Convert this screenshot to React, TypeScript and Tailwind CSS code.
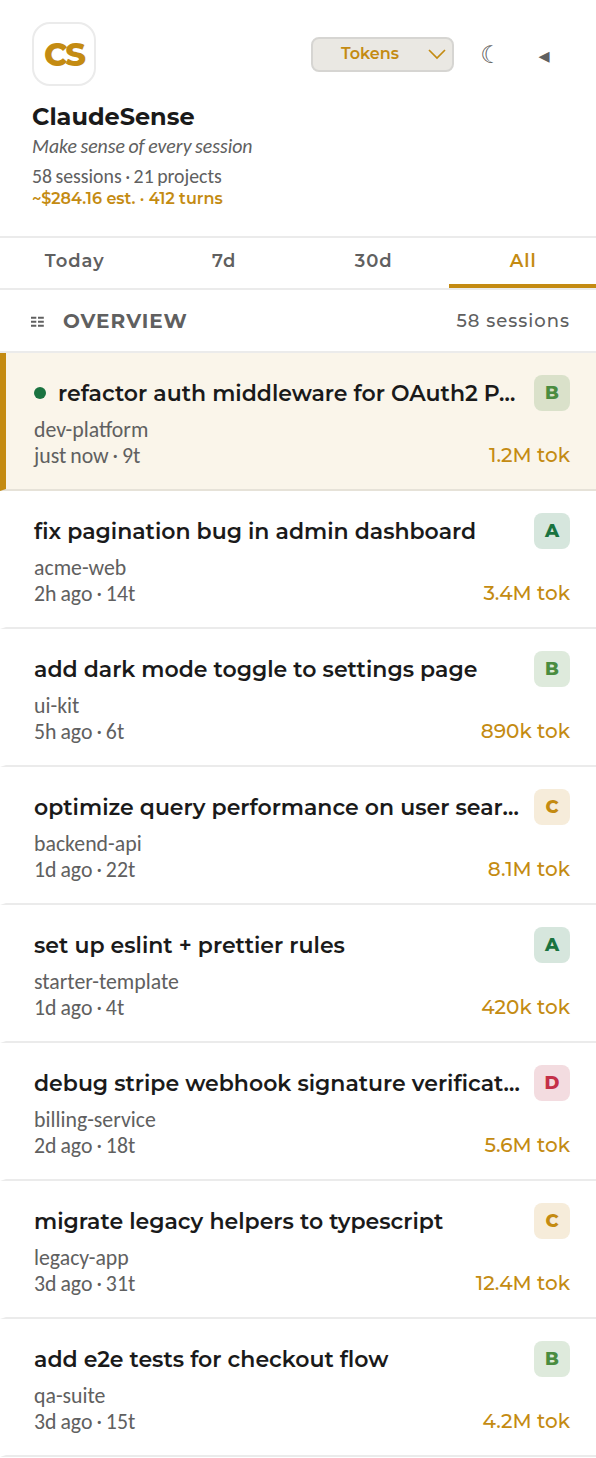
type Grade = "A" | "B" | "C" | "D";

interface Session {
  title: string;
  project: string;
  meta: string;
  tokens: string;
  grade: Grade;
  active?: boolean;
}

const sessions: Session[] = [
  { title: "refactor auth middleware for OAuth2 P…", project: "dev-platform", meta: "just now · 9t", tokens: "1.2M tok", grade: "B", active: true },
  { title: "fix pagination bug in admin dashboard", project: "acme-web", meta: "2h ago · 14t", tokens: "3.4M tok", grade: "A" },
  { title: "add dark mode toggle to settings page", project: "ui-kit", meta: "5h ago · 6t", tokens: "890k tok", grade: "B" },
  { title: "optimize query performance on user sear…", project: "backend-api", meta: "1d ago · 22t", tokens: "8.1M tok", grade: "C" },
  { title: "set up eslint + prettier rules", project: "starter-template", meta: "1d ago · 4t", tokens: "420k tok", grade: "A" },
  { title: "debug stripe webhook signature verificat…", project: "billing-service", meta: "2d ago · 18t", tokens: "5.6M tok", grade: "D" },
  { title: "migrate legacy helpers to typescript", project: "legacy-app", meta: "3d ago · 31t", tokens: "12.4M tok", grade: "C" },
  { title: "add e2e tests for checkout flow", project: "qa-suite", meta: "3d ago · 15t", tokens: "4.2M tok", grade: "B" },
];

const gradeStyles: Record<Grade, string> = {
  A: "bg-[#1a7340]/18 text-[#1a7340]",
  B: "bg-[#4a8c3f]/18 text-[#4a8c3f]",
  C: "bg-[#f6ecda] text-[#c48b12]",
  D: "bg-[#f3dce0] text-[#c43048]",
};

function SessionRow({ s }: { s: Session }) {
  return (
    <li
      className={
        s.active
          ? "h-[138px] border-b-2 border-l-[6px] border-b-[#e6e2d8] border-l-[#c48b12] bg-[#faf5ea] pt-[22px] pr-[26px] pl-[28px]"
          : "h-[138px] border-b-2 border-l-[6px] border-b-[#ebebeb] border-l-transparent pt-[22px] pr-[26px] pl-[28px]"
      }
    >
      <div className="flex h-9 items-center">
        {s.active && <span className="mr-3 size-3 shrink-0 rounded-full bg-[#1a7340]" />}
        <span className="min-w-0 flex-1 pt-0.5 text-[22px] leading-9 font-semibold whitespace-nowrap text-[#1a1a1a]">{s.title}</span>
        <span className={`ml-3 flex size-9 shrink-0 items-center justify-center rounded-lg text-[18px] leading-none font-extrabold ${gradeStyles[s.grade]}`}>
          {s.grade}
        </span>
      </div>
      <div className="mt-1.5 flex items-end justify-between">
        <div className="font-[Carlito,Lato,sans-serif] text-[21.8px] leading-[26px] text-[#606060] [word-spacing:-1px]">
          <p>{s.project}</p>
          <p>{s.meta}</p>
        </div>
        <span className="text-[20px] leading-[28px] font-medium text-[#c48b12]">{s.tokens}</span>
      </div>
    </li>
  );
}

const ranges = ["Today", "7d", "30d", "All"];

export default function App() {
  return (
    <div className="h-[1458px] w-[596px] overflow-hidden bg-white font-[Montserrat,Inter,sans-serif] text-[#606060]">
      <header className="h-[238px] border-b-2 border-[#ebebeb] px-8 pt-[22px]">
        <div className="flex h-16 items-center justify-between">
          <div className="flex size-16 items-center justify-center rounded-[18px] border-2 border-[#ebebeb] pt-px text-[32px] leading-none font-extrabold tracking-[-1.8px] text-[#c48b12]">
            CS
          </div>
          <div className="flex items-center pr-2">
            <button className="flex h-[35px] w-[143px] items-center justify-between rounded-lg border-2 border-[#d6d5d2] bg-[#eae8e3] pr-1.5 pl-7 text-[16px] leading-none font-semibold text-[#c48b12]">
              <span>Tokens</span>
              <svg width="18" height="11" viewBox="0 0 18 11" fill="none" stroke="currentColor" strokeWidth="1.7">
                <path d="M1 1l8 8 8-8" />
              </svg>
            </button>
            <button className="ml-6 w-[26px] pt-0.5 text-center font-['DejaVu_Sans',sans-serif] text-[24px] leading-8">☾</button>
            <button className="ml-[28px] w-[24px] pt-1 text-center font-['DejaVu_Sans',sans-serif] text-[22px] leading-8">◂</button>
          </div>
        </div>
        <h1 className="mt-4 text-[24px] leading-[29px] font-bold text-[#1a1a1a]">ClaudeSense</h1>
        <p className="mt-[3px] font-[Carlito,Lato,sans-serif] text-[19.8px] leading-6 italic [word-spacing:-0.9px]">Make sense of every session</p>
        <p className="mt-1.5 font-[Carlito,Lato,sans-serif] text-[19.8px] leading-6 [word-spacing:-1px]">58 sessions · 21 projects</p>
        <p className="mt-px text-[16px] leading-5 font-semibold text-[#c48b12]">~$284.16 est. · 412 turns</p>
      </header>

      <nav className="grid h-[52px] grid-cols-4 gap-0.5 border-b-2 border-[#ebebeb]">
        {ranges.map((r) => (
          <button
            key={r}
            className={
              r === "All"
                ? "border-b-4 border-[#c48b12] pl-0.5 text-[18px] leading-[46px] font-semibold tracking-[1px] text-[#c48b12]"
                : "border-b-4 border-transparent pl-0.5 text-[18px] leading-[46px] font-semibold tracking-[1px]"
            }
          >
            {r}
          </button>
        ))}
      </nav>

      <div className="flex h-[63px] items-center border-b-2 border-[#ebebeb] pr-[26px] pl-[31px]">
        <svg className="mt-[3px]" width="13" height="12" viewBox="0 0 13 12" fill="none" stroke="currentColor" strokeWidth="1.9">
          <path d="M0 1.7h5.3M7 1.7h5.8M0 5.7h5.3M7 5.7h5.8M0 9.7h5.3M7 9.7h5.8" />
        </svg>
        <h2 className="ml-[19px] flex-1 text-[20px] leading-none font-bold tracking-[1px]">OVERVIEW</h2>
        <span className="text-[18px] leading-none font-medium tracking-[1px]">58 sessions</span>
      </div>

      <ul>
        {sessions.map((s) => (
          <SessionRow key={s.title} s={s} />
        ))}
      </ul>
    </div>
  );
}
